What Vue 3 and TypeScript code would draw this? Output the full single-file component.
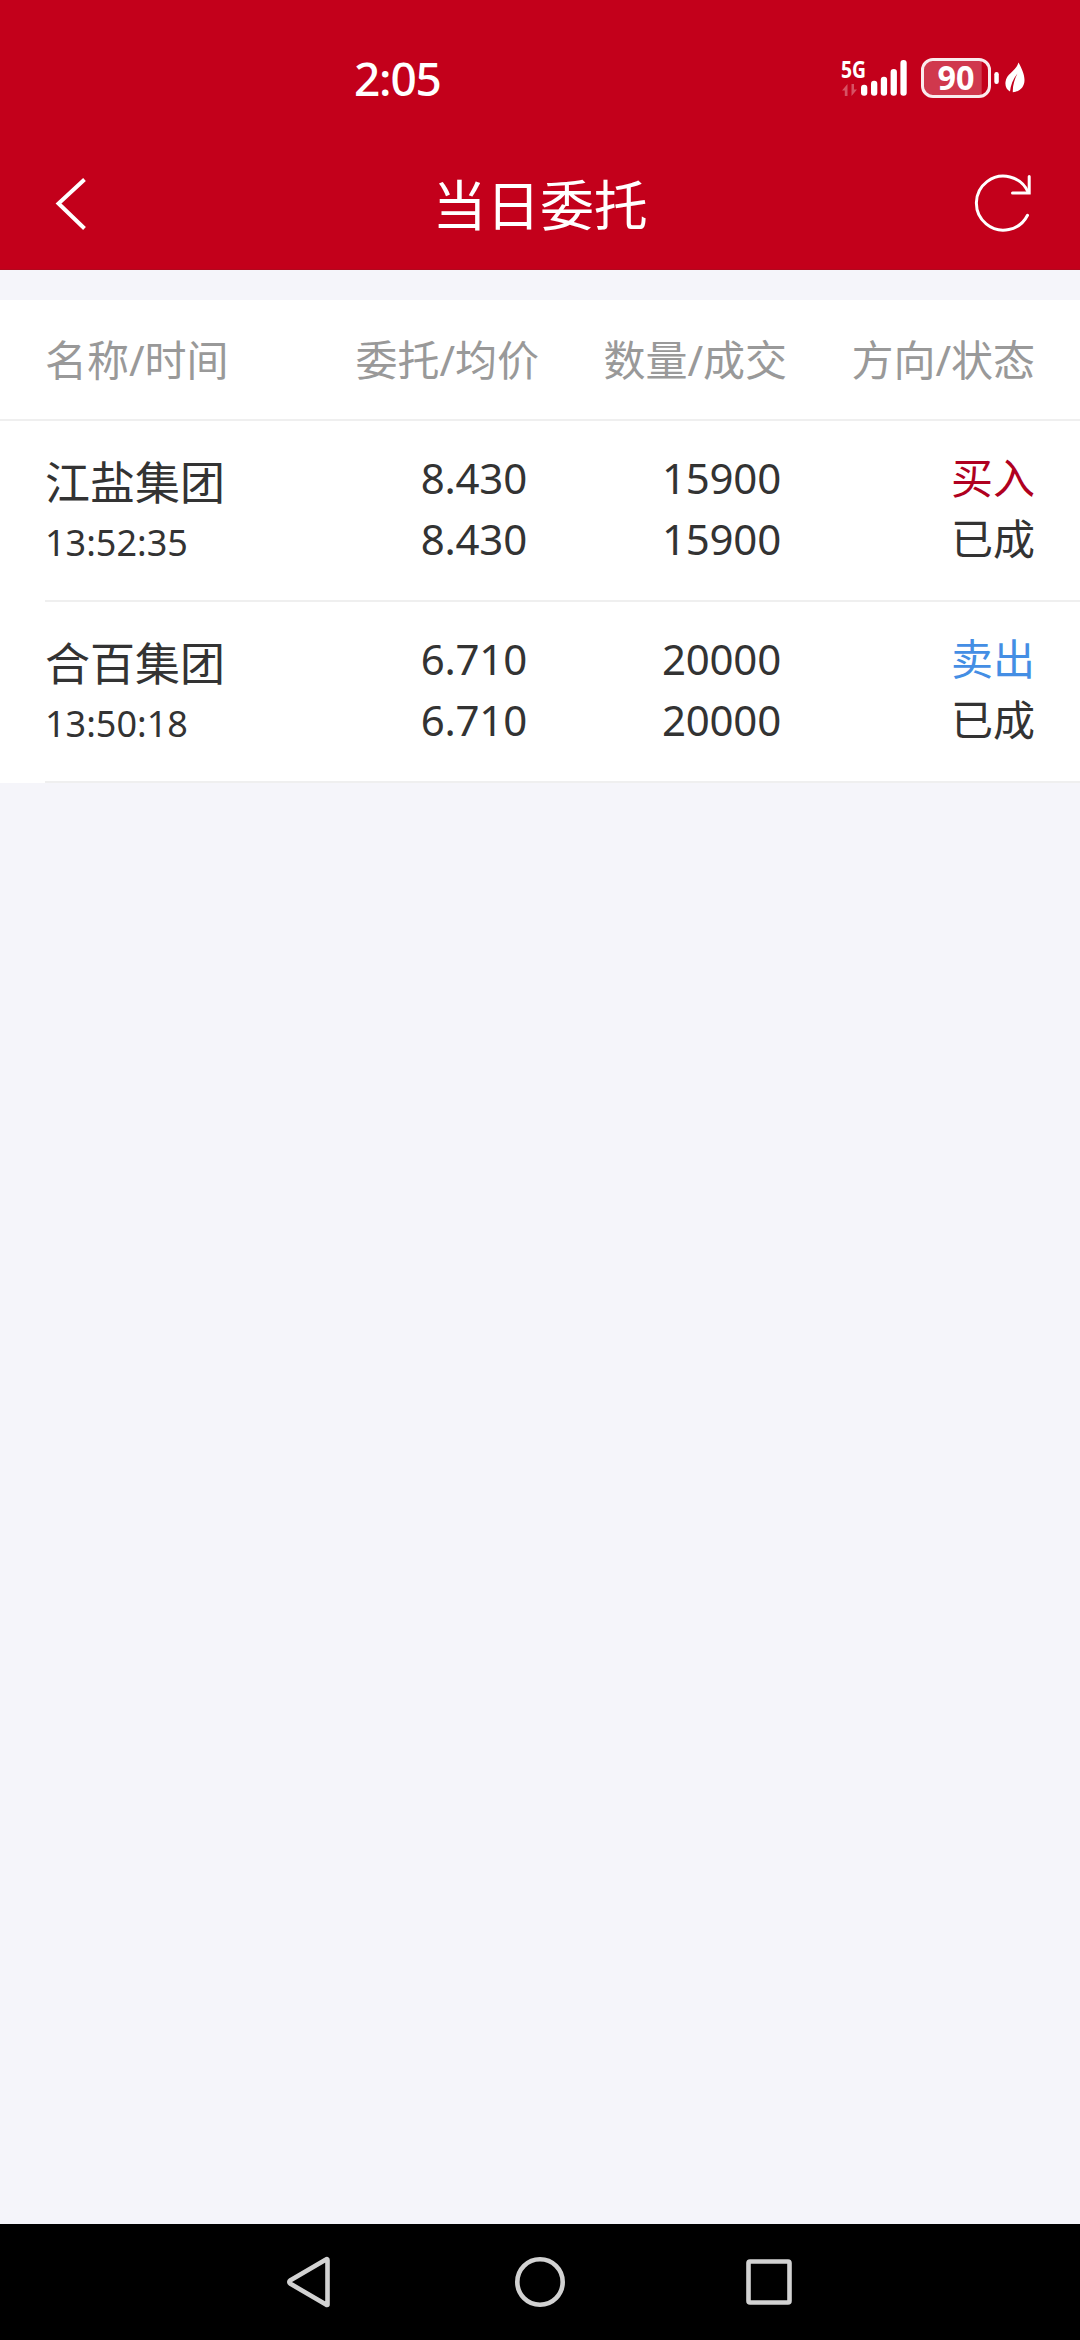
<script setup lang="ts">
interface Order {
  name: string
  time: string
  price: string
  avgPrice: string
  quantity: string
  filled: string
  side: 'buy' | 'sell'
  status: string
}

const columns: string[] = ['名称/时间', '委托/均价', '数量/成交', '方向/状态']

const sideLabel: Record<Order['side'], string> = { buy: '买入', sell: '卖出' }

const orders: Order[] = [
  {
    name: '江盐集团',
    time: '13:52:35',
    price: '8.430',
    avgPrice: '8.430',
    quantity: '15900',
    filled: '15900',
    side: 'buy',
    status: '已成',
  },
  {
    name: '合百集团',
    time: '13:50:18',
    price: '6.710',
    avgPrice: '6.710',
    quantity: '20000',
    filled: '20000',
    side: 'sell',
    status: '已成',
  },
]
</script>

<template>
  <div class="screen">
    <header class="top">
      <div class="status">
        <span class="clock">2:05</span>
        <svg class="indicators" width="194" height="64" viewBox="836 46 194 64">
          <text x="841" y="77.500" class="net" textLength="25" lengthAdjust="spacingAndGlyphs">5G</text>
          <g fill="#fff" opacity="0.32">
            <path d="M842 90.500L847.500 84V96H844.800V90.500Z" />
            <path d="M857 89.500L851.500 96V84H854V89.500Z" />
          </g>
          <g fill="#fff">
            <rect x="861" y="84.700" width="6.300" height="11" rx="3" />
            <rect x="871" y="80.700" width="6.300" height="15" rx="3" />
            <rect x="880.800" y="76.700" width="6.300" height="19" rx="3" />
            <rect x="890.600" y="69" width="6.300" height="26.700" rx="3" />
            <rect x="900.400" y="60" width="6.300" height="35.700" rx="3" />
          </g>
          <path d="M934 61H981.700V95H934Q924 95 924 85V71Q924 61 934 61Z" fill="#fff" fill-opacity="0.22" />
          <rect x="922.500" y="59.500" width="67" height="37" rx="10.500" fill="none" stroke="#fff" stroke-opacity="0.92" stroke-width="3" />
          <text x="937.500" y="90" class="level" textLength="37" lengthAdjust="spacingAndGlyphs">90</text>
          <rect x="994.300" y="72" width="4.500" height="12" rx="2.200" fill="#fff" />
          <path d="M1018.500 62.500C1021 67 1024.500 74 1024.500 80C1024.500 87 1020 91.500 1012.800 92.300C1012.500 86 1014.500 79 1017.500 73.500C1013 79 1010.500 85.500 1010 91.500C1006.500 89.500 1005 86.500 1005.500 82C1006.500 73 1015.500 72 1018.500 62.500Z" fill="#fff" />
        </svg>
      </div>
      <div class="bar">
        <svg class="back" width="50" height="60" viewBox="50 173 50 60">
          <path d="M84.500 179.500L58.500 203.500L84.500 228.500" fill="none" stroke="#fff" stroke-width="4" />
        </svg>
        <h1 class="title">当日委托</h1>
        <svg class="refresh" width="62" height="62" viewBox="972 172 62 62">
          <g fill="none" stroke="#fff" stroke-width="3" stroke-linecap="round">
            <path d="M1027.500 215.300A27 27 0 1 1 1028 192" />
            <path d="M1029.200 176.500V193H1012.500" />
          </g>
        </svg>
      </div>
    </header>

    <main class="sheet">
      <div class="grid head">
        <span v-for="c in columns" :key="c">{{ c }}</span>
      </div>
      <div v-for="o in orders" :key="o.time" class="order">
        <div class="grid row">
          <div class="cell stock">
            <span class="name">{{ o.name }}</span>
            <span class="time">{{ o.time }}</span>
          </div>
          <div class="cell price">
            <span>{{ o.price }}</span>
            <span>{{ o.avgPrice }}</span>
          </div>
          <div class="cell quantity">
            <span>{{ o.quantity }}</span>
            <span>{{ o.filled }}</span>
          </div>
          <div class="cell">
            <span :class="o.side">{{ sideLabel[o.side] }}</span>
            <span>{{ o.status }}</span>
          </div>
        </div>
      </div>
    </main>

    <nav class="nav">
      <svg width="540" height="60" viewBox="270 2252 540 60">
        <g fill="none" stroke="#d2d2d2" stroke-width="4.600" stroke-linejoin="round">
          <path d="M327.500 2260V2304.500Q327.500 2305.500 326 2304.500L290.500 2283.800Q288 2282 290.500 2280.200L326 2259.500Q327.500 2258.500 327.500 2260Z" />
          <circle cx="540" cy="2282" r="22.700" />
          <rect x="748.500" y="2261.500" width="41" height="41" rx="1.500" />
        </g>
      </svg>
    </nav>
  </div>
</template>

<style>
body {
  background: #f5f5fa;
}
</style>

<style scoped>
.screen {
  display: flex;
  flex-direction: column;
  width: 1080px;
  height: 2340px;
  overflow: hidden;
  background: #f5f5fa;
  color: #333;
  font-family: "Noto Sans", "Noto Sans CJK SC", sans-serif;
  font-size: 42px;
}

.top {
  box-sizing: border-box;
  height: 270px;
  background: #c3001b;
  border-bottom: 1px solid #b3071d;
  color: #fff;
}

.status {
  box-sizing: border-box;
  display: flex;
  align-items: center;
  justify-content: space-between;
  height: 136px;
  padding: 20px 50px 0 354px;
}

.clock {
  font-size: 46px;
  font-weight: 500;
  line-height: 60px;
  letter-spacing: -1.2px;
}

.indicators {
  overflow: visible;
}

.net {
  fill: #fff;
  font-size: 24px;
  font-weight: 700;
}

.level {
  fill: #fff;
  font-size: 34px;
  font-weight: 700;
}

.bar {
  display: grid;
  grid-template-columns: 62px 1fr 62px;
  align-items: center;
  height: 134px;
  padding: 0 46px 0 50px;
}

.title {
  margin: 0;
  padding: 3px 4px 0 0;
  font-size: 54px;
  font-weight: 400;
  line-height: 80px;
  letter-spacing: -0.3px;
  text-align: center;
}

.sheet {
  margin-top: 30px;
  background: #fff;
}

.grid {
  display: grid;
  grid-template-columns: 246px repeat(3, 248px);
  text-align: right;
}

.grid > :first-child {
  text-align: left;
}

.head {
  padding: 0 45px;
  border-bottom: 2px solid #efefef;
  color: #999;
  line-height: 119px;
}

.order {
  padding-left: 45px;
}

.row {
  box-sizing: border-box;
  height: 181px;
  padding: 26px 45px 0 0;
  border-bottom: 2px solid #efefef;
}

.cell {
  display: flex;
  flex-direction: column;
  line-height: 61px;
}

.stock {
  padding-top: 5px;
}

.name {
  font-size: 45px;
}

.time {
  font-size: 36px;
  line-height: 60px;
}

.price {
  padding-right: 12px;
  letter-spacing: -0.2px;
}

.quantity {
  padding-right: 6px;
  letter-spacing: -0.2px;
}

.buy {
  color: #b00020;
}

.sell {
  color: #448ee4;
}

.nav {
  display: flex;
  align-items: center;
  justify-content: center;
  height: 116px;
  margin-top: auto;
  background: #000;
}
</style>
